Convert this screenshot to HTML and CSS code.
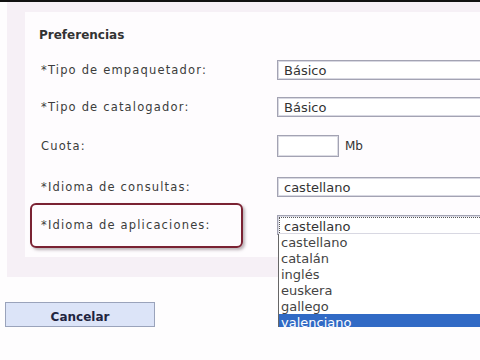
FILE: index.html
```html
<!DOCTYPE html>
<html lang="es">

<head>
	<meta charset="UTF-8">
	<meta name="viewport" content="width=device-width, initial-scale=1.0">
	<title>Preferencias</title>
	<link rel="stylesheet" href="styles.css">
</head>

<body>
	<div class="top-bar"></div>

	<div class="prefs-outer">
		<div class="prefs-panel">
			<h3>Preferencias</h3>
			<div class="prefs-grid">
				<span class="label">*Tipo de empaquetador:</span>
				<div class="select">Básico</div>

				<span class="label">*Tipo de catalogador:</span>
				<div class="select">Básico</div>

				<span class="label">Cuota:</span>
				<div class="quota">
					<input type="text" class="quota-input">
					<span class="unit">Mb</span>
				</div>

				<span class="label">*Idioma de consultas:</span>
				<div class="select">castellano</div>

				<span class="label label-marked">*Idioma de aplicaciones:</span>
				<div class="select select-open">
					<span class="focus">castellano</span>
					<ul class="dropdown">
						<li>castellano</li>
						<li>catalán</li>
						<li>inglés</li>
						<li>euskera</li>
						<li>gallego</li>
						<li class="selected">valenciano</li>
					</ul>
				</div>
			</div>
		</div>
	</div>

	<button class="btn-cancel">Cancelar</button>
</body>

</html>
```

FILE: styles.css
```css
body {
	margin: 0;
	background-color: #fefdfe;
	font-family: "DejaVu Sans", Verdana, sans-serif;
	color: #3a3a3a;
	overflow: hidden;
}

.top-bar {
	height: 2px;
	background-color: #111;
}

/* Panel (cut off by the right edge of the window) */

.prefs-outer {
	margin-left: 7px;
	padding: 10px 0 20px 18px;
	background-color: #f6f0f6;
}

.prefs-panel {
	height: 245px;
	box-sizing: border-box;
	padding: 15px 0 0 16px;
	background-color: #fefcfe;
}

.prefs-panel h3 {
	margin: 0 0 7px -2px;
	font-size: 12px;
	line-height: 17px;
	color: #333;
}

.prefs-grid {
	display: grid;
	grid-template-columns: 236px 1fr;
	grid-template-rows: 38px 36px 42px 40px 36px;
	align-items: center;
}

.label {
	font-size: 11.5px;
	letter-spacing: 1.17px;
	color: #3c3c3c;
}

.label-marked {
	margin-left: -11px;
	width: 213px;
	height: 45px;
	box-sizing: border-box;
	padding-left: 9px;
	display: flex;
	align-items: center;
	border: 2px solid #7a2233;
	border-radius: 6px;
	box-shadow: 2px 2px 3px rgba(60, 40, 50, 0.35);
}

/* Selects */

.select {
	position: relative;
	height: 20px;
	box-sizing: border-box;
	padding-left: 6px;
	border: 1px solid #a3a3b3;
	border-right: none;
	box-shadow: inset 0 1px 0 #d8d8e2, inset 1px 0 0 #d8d8e2, inset 0 -1px 0 #d8d8e2;
	background-color: #fff;
	font-size: 13px;
	line-height: 19px;
	color: #333;
}

.select-open {
	padding: 1px 0 1px 1px;
}

.select-open .focus {
	display: block;
	height: 16px;
	padding-left: 4px;
	line-height: 17px;
	border: 1px dotted #555;
	border-right: none;
}

.dropdown {
	position: absolute;
	top: 100%;
	left: 0;
	right: 0;
	margin: 0;
	padding: 0;
	list-style: none;
	background-color: #fff;
	border-left: 1px solid #666;
	border-bottom: 1px solid #333;
}

.dropdown li {
	height: 16px;
	padding-left: 2px;
	line-height: 17px;
	color: #444;
}

.dropdown .selected {
	background-color: #316ac5;
	color: #fff;
}

/* Quota */

.quota {
	display: flex;
	align-items: center;
}

.quota-input {
	width: 62px;
	height: 22px;
	box-sizing: border-box;
	margin: 0;
	border: 1px solid #a3a3b3;
	box-shadow: inset 0 0 0 1px #dcdce4;
	background-color: #fff;
}

.unit {
	margin-left: 6px;
	font-size: 12px;
	color: #333;
}

/* Button */

.btn-cancel {
	display: block;
	margin: 25px 0 0 5px;
	width: 150px;
	height: 25px;
	padding: 5px 0 0;
	border: 1px solid #9aa3bb;
	background-color: #dce4f8;
	font-family: "DejaVu Sans", Verdana, sans-serif;
	font-weight: bold;
	font-size: 12px;
	line-height: 14px;
	color: #1f2440;
}
```
